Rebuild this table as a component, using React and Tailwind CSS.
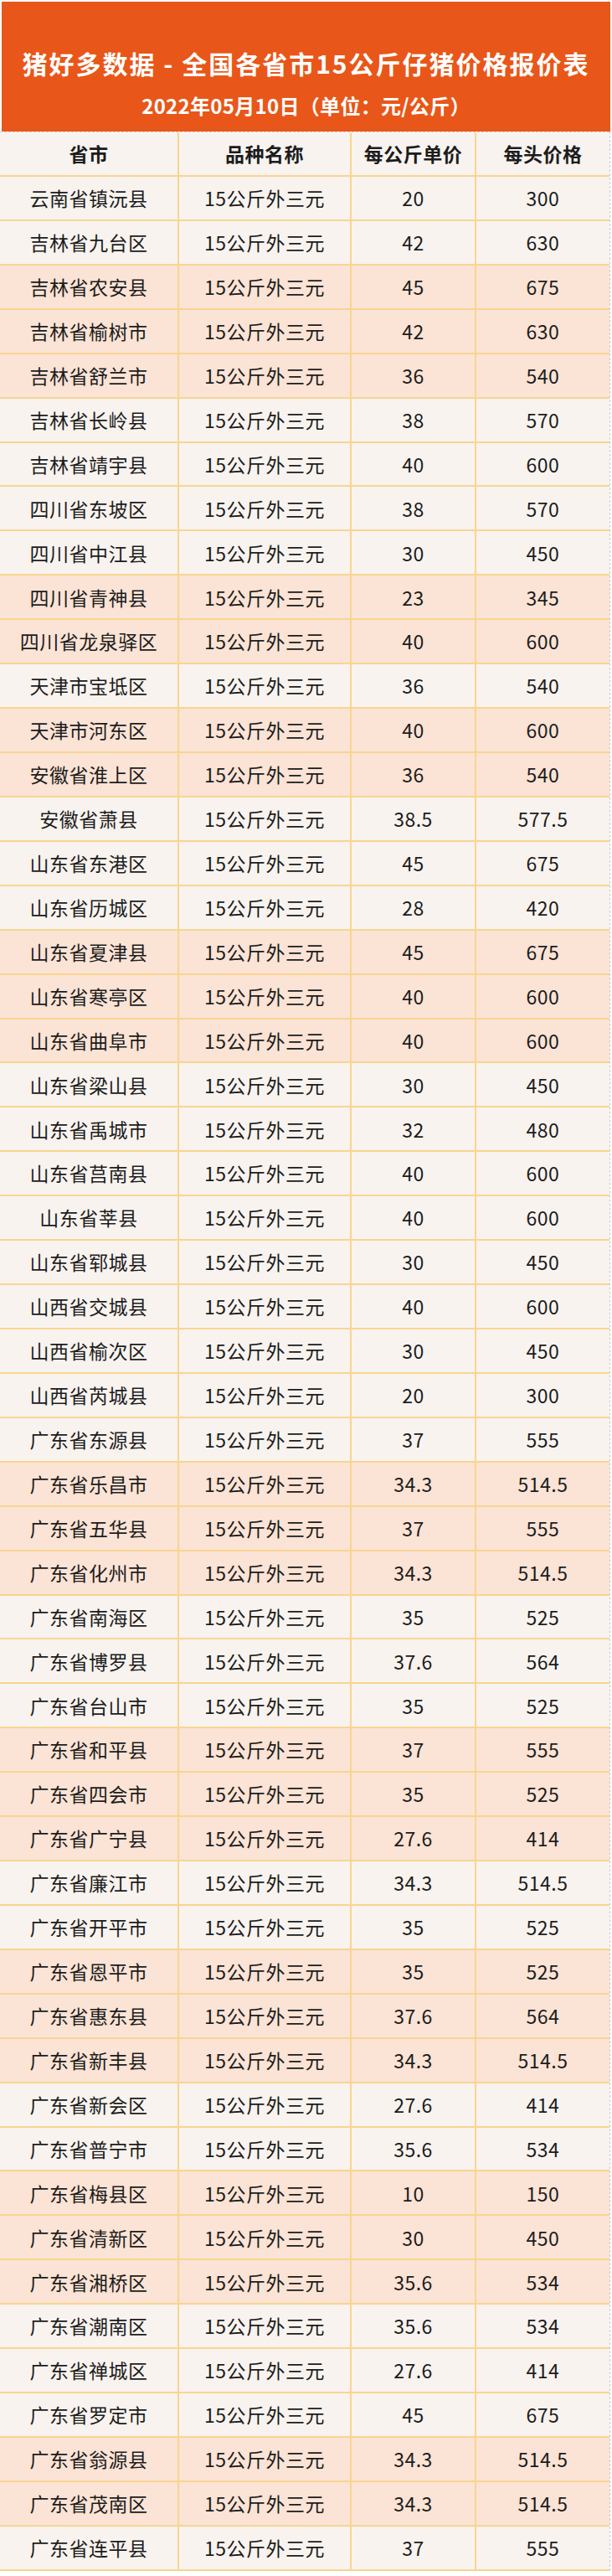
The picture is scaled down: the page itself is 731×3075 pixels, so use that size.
const rows = [
  ["云南省镇沅县", "20", "300", 0],
  ["吉林省九台区", "42", "630", 0],
  ["吉林省农安县", "45", "675", 1],
  ["吉林省榆树市", "42", "630", 1],
  ["吉林省舒兰市", "36", "540", 1],
  ["吉林省长岭县", "38", "570", 0],
  ["吉林省靖宇县", "40", "600", 0],
  ["四川省东坡区", "38", "570", 0],
  ["四川省中江县", "30", "450", 0],
  ["四川省青神县", "23", "345", 1],
  ["四川省龙泉驿区", "40", "600", 1],
  ["天津市宝坻区", "36", "540", 0],
  ["天津市河东区", "40", "600", 1],
  ["安徽省淮上区", "36", "540", 1],
  ["安徽省萧县", "38.5", "577.5", 0],
  ["山东省东港区", "45", "675", 0],
  ["山东省历城区", "28", "420", 0],
  ["山东省夏津县", "45", "675", 1],
  ["山东省寒亭区", "40", "600", 1],
  ["山东省曲阜市", "40", "600", 1],
  ["山东省梁山县", "30", "450", 0],
  ["山东省禹城市", "32", "480", 0],
  ["山东省莒南县", "40", "600", 0],
  ["山东省莘县", "40", "600", 0],
  ["山东省郓城县", "30", "450", 0],
  ["山西省交城县", "40", "600", 0],
  ["山西省榆次区", "30", "450", 0],
  ["山西省芮城县", "20", "300", 0],
  ["广东省东源县", "37", "555", 0],
  ["广东省乐昌市", "34.3", "514.5", 1],
  ["广东省五华县", "37", "555", 1],
  ["广东省化州市", "34.3", "514.5", 1],
  ["广东省南海区", "35", "525", 0],
  ["广东省博罗县", "37.6", "564", 0],
  ["广东省台山市", "35", "525", 0],
  ["广东省和平县", "37", "555", 1],
  ["广东省四会市", "35", "525", 1],
  ["广东省广宁县", "27.6", "414", 1],
  ["广东省廉江市", "34.3", "514.5", 0],
  ["广东省开平市", "35", "525", 0],
  ["广东省恩平市", "35", "525", 1],
  ["广东省惠东县", "37.6", "564", 1],
  ["广东省新丰县", "34.3", "514.5", 1],
  ["广东省新会区", "27.6", "414", 0],
  ["广东省普宁市", "35.6", "534", 0],
  ["广东省梅县区", "10", "150", 1],
  ["广东省清新区", "30", "450", 1],
  ["广东省湘桥区", "35.6", "534", 1],
  ["广东省潮南区", "35.6", "534", 0],
  ["广东省禅城区", "27.6", "414", 0],
  ["广东省罗定市", "45", "675", 0],
  ["广东省翁源县", "34.3", "514.5", 1],
  ["广东省茂南区", "34.3", "514.5", 1],
  ["广东省连平县", "37", "555", 0],
];

function Row({ cells, shaded, head }) {
  return (
    <div
      className={`grid grid-cols-[214px_206px_149px_159px] border-b-2 border-[#f8d590] ${
        head ? "h-[53px]" : "h-[52.93px]"
      } ${shaded ? "bg-[#fbe3d5]" : "bg-[#f8f3ef]"}`}
    >
      {cells.map((c, i) => (
        <div
          key={i}
          className={`flex items-center justify-center ${
            i < 3 ? "border-r-2 border-[#f8d590]" : ""
          } ${head ? "font-bold" : "font-normal"}`}
        >
          {c}
        </div>
      ))}
    </div>
  );
}

export default function App() {
  return (
    <div
      className="w-[731px] bg-white pt-[2px] text-[#1c1c1c]"
      style={{ fontFamily: '"Noto Sans CJK SC", "Noto Sans", sans-serif' }}
    >
      <div className="mx-[2px] h-[155px] bg-[#e85719] flex flex-col items-center pt-[53px] text-white font-bold">
        <h1 className="text-[30px] leading-[40px] tracking-[2px]">
          猪好多数据 - 全国各省市15公斤仔猪价格报价表
        </h1>
        <p className="mt-[16px] text-[24px] leading-[30px] tracking-[0.3px]">
          2022年05月10日（单位：元/公斤）
        </p>
      </div>
      <div className="w-[729px] border-r border-dashed border-[#c9c9c9] text-[23px] tracking-[0.5px]">
        <div className="border-t border-dashed border-[#d0d0d0]">
          <Row head cells={["省市", "品种名称", "每公斤单价", "每头价格"]} />
        </div>
        {rows.map((r, i) => (
          <Row
            key={i}
            shaded={r[3] === 1}
            cells={[r[0], "15公斤外三元", r[1], r[2]]}
          />
        ))}
      </div>
    </div>
  );
}
